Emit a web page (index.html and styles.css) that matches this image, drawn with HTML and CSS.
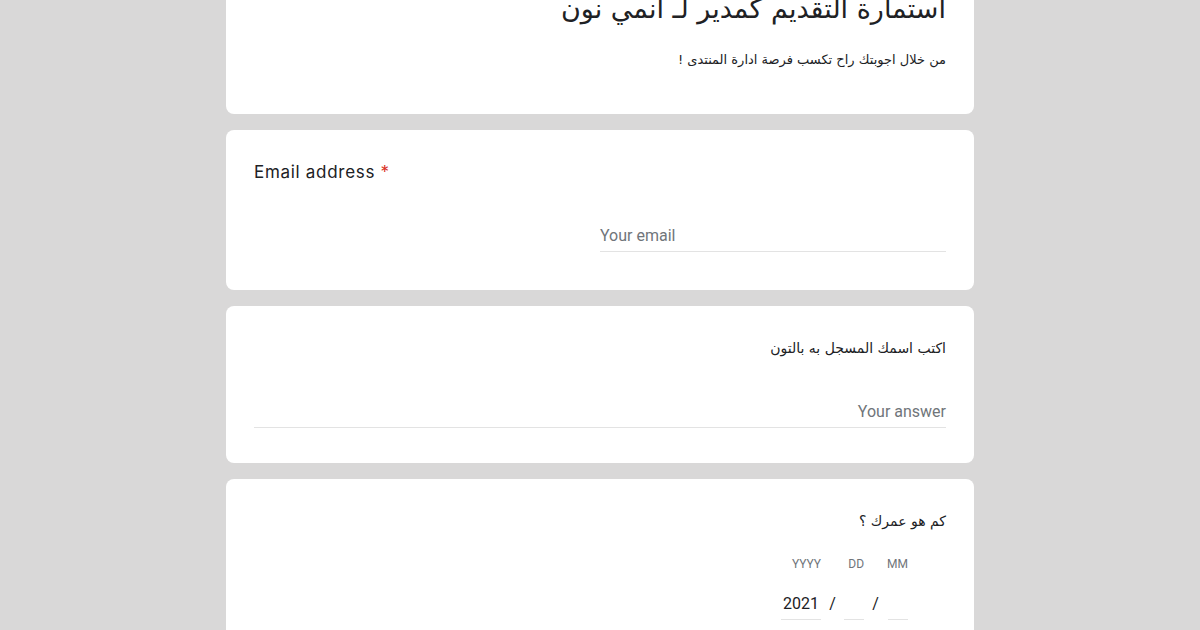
FILE: index.html
```html
<!DOCTYPE html>
<html lang="ar">
<head>
<meta charset="utf-8">
<title>استمارة التقديم كمدير لـ انمي نون</title>
<link rel="stylesheet" href="styles.css">
</head>
<body>
<main class="form">
  <section class="card header-card" dir="rtl">
    <h1 class="title">استمارة التقديم كمدير لـ انمي نون</h1>
    <p class="desc">من خلال اجوبتك راح تكسب فرصة ادارة المنتدى !</p>
  </section>

  <section class="card">
    <div class="question en">Email address <span class="req">*</span></div>
    <div class="field half"><span class="placeholder">Your email</span></div>
  </section>

  <section class="card short" dir="rtl">
    <div class="question ar">اكتب اسمك المسجل به بالتون</div>
    <div class="field full"><span class="placeholder">Your answer</span></div>
  </section>

  <section class="card" dir="rtl">
    <div class="question ar">كم هو عمرك ؟</div>
    <div class="date-row">
      <div class="date-col">
        <span class="date-label">MM</span>
        <span class="date-input w20"></span>
      </div>
      <span class="slash">/</span>
      <div class="date-col">
        <span class="date-label">DD</span>
        <span class="date-input w20"></span>
      </div>
      <span class="slash">/</span>
      <div class="date-col">
        <span class="date-label">YYYY</span>
        <span class="date-input w40">2021</span>
      </div>
    </div>
  </section>
</main>
</body>
</html>
```

FILE: styles.css
```css
html, body {
  margin: 0;
  padding: 0;
  background: #d9d8d8;
  height: 100%;
  overflow: hidden;
}

.form {
  width: 748px;
  margin: -38px auto 0;
  display: flex;
  flex-direction: column;
  gap: 16px;
}

.card {
  background: #ffffff;
  border-radius: 8px;
  padding: 30px 28px 38px;
}

.card.short {
  padding-bottom: 35px;
}

.header-card {
  padding: 27px 28px 44px;
}

.title {
  margin: 0;
  font-family: "DejaVu Sans", sans-serif;
  font-weight: normal;
  font-size: 27px;
  line-height: 40px;
  color: #202124;
}

.desc {
  margin: 21px 0 0;
  font-family: "DejaVu Sans", sans-serif;
  font-size: 13px;
  line-height: 20px;
  color: #202124;
}

.question {
  line-height: 24px;
  color: #202124;
}

.question.en {
  font-family: Inter, "Liberation Sans", sans-serif;
  font-size: 17px;
  letter-spacing: 0.7px;
}

.question.ar {
  font-family: "DejaVu Sans", sans-serif;
  font-size: 14px;
}

.req {
  color: #d93025;
}

.field {
  margin-top: 40px;
  padding-bottom: 3px;
  border-bottom: 1px solid #e3e3e3;
  line-height: 24px;
}

.field.half {
  width: 50%;
  margin-left: auto;
}

.field.full {
  width: 100%;
}

.placeholder {
  font-family: Roboto, "Liberation Sans", sans-serif;
  font-size: 16px;
  color: #70757a;
}

.date-row {
  display: flex;
  align-items: flex-end;
  margin-top: 23px;
  margin-right: 38px;
  font-family: Roboto, "Liberation Sans", sans-serif;
}

.date-col {
  display: flex;
  flex-direction: column;
  align-items: flex-start;
}

.date-label {
  font-size: 12px;
  line-height: 16px;
  color: #70757a;
  white-space: nowrap;
  margin-bottom: 20px;
}

.date-input {
  display: block;
  height: 24px;
  line-height: 24px;
  padding-bottom: 3px;
  border-bottom: 1px solid #e3e3e3;
  font-size: 16px;
  color: #202124;
  text-align: center;
}

.w20 { width: 20px; }
.w40 { width: 40px; }

.slash {
  width: 23px;
  text-align: center;
  font-size: 16px;
  line-height: 24px;
  padding-bottom: 4px;
  color: #202124;
}
```
